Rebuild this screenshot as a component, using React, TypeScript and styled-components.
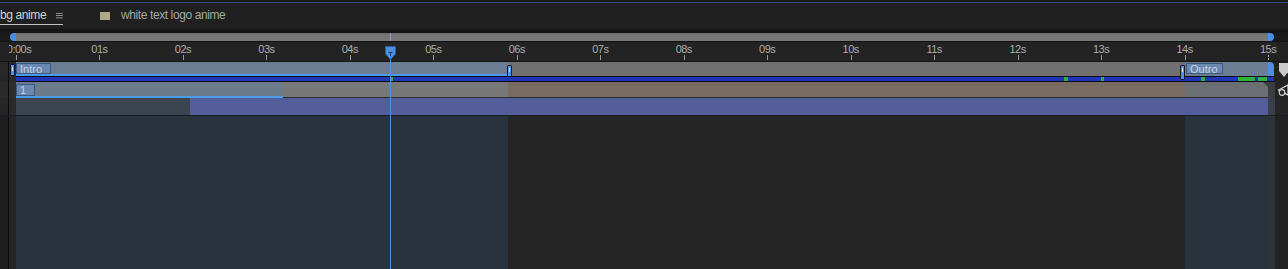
import React from "react";
import styled, { createGlobalStyle } from "styled-components";

const X0 = 16;
const PPS = 83.47;
const tx = (t: number) => X0 + t * PPS;

const Global = createGlobalStyle`
  html, body { margin: 0; padding: 0; background: #232323; }
  body { width: 1288px; height: 269px; overflow: hidden; font-family: "Liberation Sans", Arial, sans-serif; }
  #root { width: 1288px; height: 269px; }
`;

const Frame = styled.div`
  position: relative;
  width: 1288px;
  height: 269px;
  overflow: hidden;
  display: flex;
  flex-direction: column;
  background: #232323;
`;

const TopStrip = styled.div`
  height: 2px;
  background: #1b1b1b;
  border-bottom: 1px solid #3d4a78;
`;

const TabBar = styled.div`
  height: 26px;
  background: #202020;
  display: flex;
  align-items: flex-start;
`;

const Tab = styled.div<{ $active?: boolean }>`
  display: flex;
  align-items: flex-start;
  gap: 10px;
  margin-top: 6px;
  height: 15px;
  font-size: 12px;
  line-height: 13px;
  letter-spacing: -0.4px;
  color: ${(p) => (p.$active ? "#d2d2d2" : "#a6a6a6")};
  border-bottom: 1px solid ${(p) => (p.$active ? "#c4c4c4" : "transparent")};
  white-space: nowrap;
`;

const FirstTab = styled(Tab)`
  width: 63px;
`;

const SecondTab = styled(Tab)`
  margin-left: 37px;
  gap: 11px;
`;

const Swatch = styled.span<{ $c: string }>`
  display: block;
  width: 10px;
  height: 8px;
  margin-top: 3px;
  background: ${(p) => p.$c};
`;

const MenuIcon = styled.svg`
  display: block;
  margin-top: 3px;
`;

const NavGap = styled.div`
  height: 4px;
  background: #161616;
`;

const NavRow = styled.div`
  height: 8px;
  display: flex;
  background: #1b1b1b;
  border-bottom: 1px solid #121212;
`;

const NavCap = styled.div<{ $side: "l" | "r" }>`
  width: 6px;
  background: #4a90e2;
  border-radius: ${(p) => (p.$side === "l" ? "4px 0 0 4px" : "0 4px 4px 0")};
`;

const NavBar = styled.div`
  position: relative;
  width: 1252px;
  background: #777777;
  box-shadow: inset 0 1px 0 #6a6a6a;
`;

const NavMark = styled.div`
  position: absolute;
  top: 0;
  bottom: 0;
  width: 1px;
  background: #8da4c4;
`;

const Ruler = styled.div`
  position: relative;
  height: 19px;
  background: #232323;
  border-bottom: 1px solid #151515;
`;

const RulerScale = styled.div`
  position: absolute;
  left: 9px;
  top: 0;
  right: 0;
  bottom: 0;
  overflow: hidden;
`;

const RulerLabel = styled.span`
  position: absolute;
  top: 2px;
  transform: translateX(-50%);
  font-size: 11px;
  line-height: 11px;
  letter-spacing: -0.5px;
  color: #aeaeae;
  white-space: nowrap;
`;

const Tick = styled.span<{ $dashed?: boolean }>`
  position: absolute;
  top: 13px;
  width: 1px;
  height: ${(p) => (p.$dashed ? 7 : 5)}px;
  background: ${(p) =>
    p.$dashed
      ? "repeating-linear-gradient(#b0b0b0 0 2px, transparent 2px 3px)"
      : "#9a9a9a"};
`;

const Row = styled.div<{ $h: number; $line?: string }>`
  display: flex;
  height: ${(p) => p.$h}px;
  flex: none;
  ${(p) => (p.$line ? `border-bottom: 1px solid ${p.$line};` : "")}
`;

const Gutter = styled.div<{ $l: string; $r: string }>`
  width: 16px;
  flex: none;
  display: flex;
  background: ${(p) => p.$r};
  &::before {
    content: "";
    width: 8px;
    background: ${(p) => p.$l};
  }
  &::after {
    content: "";
    width: 1px;
    background: #0b0b0b;
  }
`;

const Seg = styled.div<{ $w: number; $bg: string; $edge?: string; $edgeW?: number }>`
  width: ${(p) => p.$w}px;
  flex: none;
  background: ${(p) => p.$bg};
  ${(p) => (p.$edge ? `box-shadow: inset 0 -${p.$edgeW ?? 2}px 0 ${p.$edge};` : "")}
`;

const Fill = styled.div<{ $bg: string }>`
  flex: 1;
  background: ${(p) => p.$bg};
`;

const BlueBar = styled.div`
  display: flex;
  height: 6px;
  flex: none;
`;

const BlueTrack = styled.div`
  width: 1258px;
  background: #2136b6;
  border-top: 1px solid #0a0a12;
  border-bottom: 1px solid #0a0a12;
`;

const Bottom = styled.div`
  display: flex;
  flex: 1;
`;

/* overlays placed by time */
const Playhead = styled.div`
  position: absolute;
  left: 390px;
  top: 46px;
  bottom: 0;
  width: 1px;
  background: #4f92e6;
`;

const PlayheadHead = styled.svg`
  position: absolute;
  left: 385px;
  top: 46px;
`;

const MarkerLabel = styled.div<{ $w: number }>`
  position: absolute;
  width: ${(p) => p.$w}px;
  height: 11px;
  box-sizing: border-box;
  background: #6987b1;
  border: 1px solid #3d587f;
  color: #c6d1e2;
  font-size: 11px;
  line-height: 10px;
  padding-left: 3px;
  white-space: nowrap;
  overflow: hidden;
`;

const Handle = styled.div<{ $h: number }>`
  position: absolute;
  width: 5px;
  height: ${(p) => p.$h}px;
  box-sizing: border-box;
  background: #4d94e8;
  border: 1px solid #141a28;
  border-radius: 1px;
  &::after {
    content: "";
    position: absolute;
    left: 1px;
    top: 2px;
    width: 1px;
    height: 4px;
    background: #cfe0f6;
  }
`;

const EndCap = styled.div`
  position: absolute;
  width: 6px;
  background: #4a90e2;
  border-radius: 0 4px 0 0;
`;

const Green = styled.div`
  position: absolute;
  top: 77px;
  height: 4px;
  background: #2fb43a;
`;

const OutTri = styled.div`
  position: absolute;
  left: 1263px;
  top: 82px;
  width: 0;
  height: 0;
  border-left: 5px solid transparent;
  border-top: 5px solid #3b3b3b;
`;

const SideIcon = styled.svg`
  position: absolute;
`;

const ticks = Array.from({ length: 16 }, (_, i) => i);
const label = (i: number) => (i === 0 ? "0:00s" : `${String(i).padStart(2, "0")}s`);

const greens: [number, number][] = [
  [1064, 4],
  [1101, 3],
  [1201, 4],
  [1238, 17],
  [1258, 9],
  [391, 2],
];

export default function App() {
  const introEnd = 508;
  const outroStart = 1185;
  const trackEnd = 1268;
  return (
    <>
      <Global />
      <Frame>
        <TopStrip />
        <TabBar>
          <FirstTab $active>
            <span>bg anime</span>
            <MenuIcon width="9" height="8" viewBox="0 0 9 8">
              <rect x="0" y="0" width="9" height="1" fill="#b5b5b5" />
              <rect x="0" y="3" width="9" height="1" fill="#b5b5b5" />
              <rect x="0" y="6" width="9" height="1" fill="#b5b5b5" />
            </MenuIcon>
          </FirstTab>
          <SecondTab>
            <Swatch $c="#b3a588" />
            <span>white text logo anime</span>
          </SecondTab>
        </TabBar>
        <NavGap />
        <NavRow>
          <Seg $w={10} $bg="#1b1b1b" />
          <NavCap $side="l" />
          <NavBar>
            <NavMark style={{ left: 390 - 16 }} />
          </NavBar>
          <NavCap $side="r" />
        </NavRow>
        <Ruler>
          <RulerScale>
            {ticks.map((i) => (
              <React.Fragment key={i}>
                <RulerLabel style={{ left: tx(i) - 9 + (i === 0 ? 3 : 0) }}>{label(i)}</RulerLabel>
                <Tick $dashed={i === 15} style={{ left: Math.round(tx(i)) - 9 }} />
              </React.Fragment>
            ))}
          </RulerScale>
        </Ruler>
        <Row $h={14}>
          <Gutter $l="#282828" $r="#2a2a2a" />
          <Seg $w={introEnd - 16} $bg="#6b7d92" $edge="#4b9be8" />
          <Seg $w={outroStart - introEnd} $bg="#707070" />
          <Seg $w={trackEnd - outroStart} $bg="#6c7e93" />
          <Fill $bg="#232323" />
        </Row>
        <BlueBar>
          <Gutter $l="#262626" $r="#2a2a2a" />
          <BlueTrack />
          <Fill $bg="#232323" />
        </BlueBar>
        <Row $h={16}>
          <Gutter $l="#2b2b2b" $r="#2e2e2e" />
          <Seg $w={283 - 16} $bg="#6a7c8c" $edge="#4b9be8" />
          <Seg $w={introEnd - 283} $bg="#787878" $edge="#2c2c2c" $edgeW={1} />
          <Seg $w={outroStart - introEnd} $bg="#776c5f" $edge="#2c2c2c" $edgeW={1} />
          <Seg $w={trackEnd - outroStart} $bg="#6b6e73" $edge="#2c2c2c" $edgeW={1} />
          <Seg $w={7} $bg="#3a3d42" />
          <Fill $bg="#232323" />
        </Row>
        <Row $h={17} $line="#1a1d24">
          <Gutter $l="#262626" $r="#2a2a2a" />
          <Seg $w={190 - 16} $bg="#3b4550" />
          <Seg $w={trackEnd - 190} $bg="#535e9a" />
          <Seg $w={7} $bg="#3a3f48" />
          <Fill $bg="#252525" />
        </Row>
        <Bottom>
          <Gutter $l="#1e1e1e" $r="#262626" />
          <Seg $w={introEnd - 16} $bg="#29333d" />
          <Seg $w={outroStart - introEnd} $bg="#262626" />
          <Seg $w={trackEnd - outroStart} $bg="#29333d" />
          <Seg $w={7} $bg="#2d343c" />
          <Fill $bg="#232323" />
        </Bottom>

        {greens.map(([x, w]) => (
          <Green key={x} style={{ left: x, width: w }} />
        ))}
        <MarkerLabel $w={35} style={{ left: 16, top: 63 }}>Intro</MarkerLabel>
        <Handle $h={12} style={{ left: 10, top: 64 }} />
        <Handle $h={12} style={{ left: 507, top: 65 }} />
        <MarkerLabel $w={37} style={{ left: 1186, top: 63 }}>Outro</MarkerLabel>
        <Handle $h={15} style={{ left: 1180, top: 65 }} />
        <EndCap style={{ left: trackEnd, top: 62, height: 14 }} />
        <MarkerLabel $w={19} style={{ left: 16, top: 84, height: 12 }}>1</MarkerLabel>
        <OutTri />
        <SideIcon width="10" height="14" viewBox="0 0 10 14" style={{ left: 1279, top: 63 }}>
          <path d="M0 0 H10 V8 L5 14 L0 8 Z" fill="#c9c9c9" />
        </SideIcon>
        <SideIcon width="12" height="13" viewBox="0 0 12 13" style={{ left: 1277, top: 84 }}>
          <path d="M1.5 6 L11 1 V11 Z" fill="none" stroke="#d0d0d0" strokeWidth="1.2" />
          <circle cx="5" cy="8.5" r="2.8" fill="#232323" stroke="#d0d0d0" strokeWidth="1.2" />
        </SideIcon>
        <Playhead />
        <PlayheadHead width="11" height="14" viewBox="0 0 11 14">
          <path d="M0.5 0.5 H10.5 V8 L5.5 13.5 L0.5 8 Z" fill="#4a8fe2" stroke="#2a5e9e" strokeWidth="0.8" />
          <rect x="3.5" y="6" width="4" height="1" fill="#1d3a66" />
          <rect x="5" y="6" width="1" height="4" fill="#1d3a66" />
        </PlayheadHead>
      </Frame>
    </>
  );
}
